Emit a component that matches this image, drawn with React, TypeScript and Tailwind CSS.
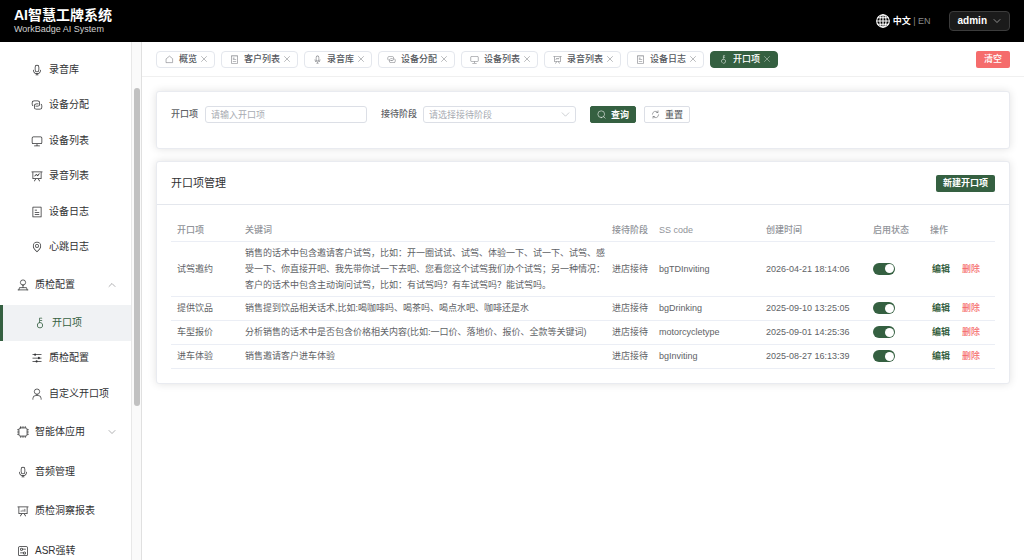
import React from "react";

const ICONS: Record<string, string[]> = {
  mic: [
    "M512 128a128 128 0 0 0-128 128v256a128 128 0 1 0 256 0V256a128 128 0 0 0-128-128zm0-64a192 192 0 0 1 192 192v256a192 192 0 1 1-384 0V256A192 192 0 0 1 512 64zm-32 832v-64a288 288 0 0 1-288-288v-32a32 32 0 0 1 64 0v32a224 224 0 0 0 224 224h64a224 224 0 0 0 224-224v-32a32 32 0 1 1 64 0v32a288 288 0 0 1-288 288v64h64a32 32 0 1 1 0 64H416a32 32 0 1 1 0-64h64z",
  ],
  connection: [
    "M640 384v64H448a128 128 0 0 0-128 128v128a128 128 0 0 0 128 128h320a128 128 0 0 0 128-128V576a128 128 0 0 0-64-110.848V394.88c74.56 26.368 128 97.472 128 181.056v128a192 192 0 0 1-192 192H448a192 192 0 0 1-192-192V576a192 192 0 0 1 192-192h192z",
    "M384 640v-64h192a128 128 0 0 0 128-128V320a128 128 0 0 0-128-128H256a128 128 0 0 0-128 128v128a128 128 0 0 0 64 110.848v70.272A192.064 192.064 0 0 1 64 448V320a192 192 0 0 1 192-192h320a192 192 0 0 1 192 192v128a192 192 0 0 1-192 192H384z",
  ],
  monitor: [
    "M544 768v128h192a32 32 0 1 1 0 64H288a32 32 0 1 1 0-64h192V768H192A128 128 0 0 1 64 640V256a128 128 0 0 1 128-128h640a128 128 0 0 1 128 128v384a128 128 0 0 1-128 128H544zM192 192a64 64 0 0 0-64 64v384a64 64 0 0 0 64 64h640a64 64 0 0 0 64-64V256a64 64 0 0 0-64-64H192z",
  ],
  dataLine: [
    "M359.168 768H160a32 32 0 0 1-32-32V192H64a32 32 0 0 1 0-64h896a32 32 0 1 1 0 64h-64v544a32 32 0 0 1-32 32H665.216l110.848 192h-73.856L591.36 768H433.024L322.176 960H248.32l110.848-192zM832 192H192v512h640V192zM342.656 534.656a32 32 0 1 1-45.312-45.312L444.992 341.76l125.44 94.08L679.04 300.032a32 32 0 1 1 49.92 39.936L581.632 524.224 451.008 426.24 342.656 534.592z",
  ],
  dataAnalysis: [
    "m665.216 768 110.848 192h-73.856L591.36 768H433.024L322.176 960H248.32l110.848-192H160a32 32 0 0 1-32-32V192H64a32 32 0 0 1 0-64h896a32 32 0 1 1 0 64h-64v544a32 32 0 0 1-32 32H665.216zM832 192H192v512h640V192zM352 448a32 32 0 0 1 32 32v64a32 32 0 0 1-64 0v-64a32 32 0 0 1 32-32zm160-64a32 32 0 0 1 32 32v128a32 32 0 0 1-64 0V416a32 32 0 0 1 32-32zm160-64a32 32 0 0 1 32 32v192a32 32 0 1 1-64 0V352a32 32 0 0 1 32-32z",
  ],
  tickets: [
    "M192 128v768h640V128H192zm-32-64h704a32 32 0 0 1 32 32v832a32 32 0 0 1-32 32H160a32 32 0 0 1-32-32V96a32 32 0 0 1 32-32zm160 448h384v64H320v-64zm0-192h192v64H320v-64zm0 384h384v64H320v-64z",
  ],
  location: [
    "M800 416a288 288 0 1 0-576 0c0 118.144 94.528 272.128 288 456.576C705.472 688.128 800 534.144 800 416zM512 960C277.312 746.688 160 565.312 160 416a352 352 0 0 1 704 0c0 149.312-117.312 330.688-352 544z",
    "M512 512a96 96 0 1 0 0-192 96 96 0 0 0 0 192zm0 64a160 160 0 1 1 0-320 160 160 0 0 1 0 320z",
  ],
  key: [
    "M448 456.064V96a32 32 0 0 1 32-32.064L672 64a32 32 0 0 1 0 64H512v128h160a32 32 0 0 1 0 64H512v128a256 256 0 1 1-64 8.064zM512 896a192 192 0 1 0 0-384 192 192 0 0 0 0 384z",
  ],
  operation: [
    "M389.44 768a96.064 96.064 0 0 1 181.12 0H896v64H570.56a96.064 96.064 0 0 1-181.12 0H128v-64h261.44zm192-288a96.064 96.064 0 0 1 181.12 0H896v64H762.56a96.064 96.064 0 0 1-181.12 0H128v-64h453.44zm-320-288a96.064 96.064 0 0 1 181.12 0H896v64H442.56a96.064 96.064 0 0 1-181.12 0H128v-64h133.44z",
  ],
  setUp: [
    "M224 160a64 64 0 0 0-64 64v576a64 64 0 0 0 64 64h576a64 64 0 0 0 64-64V224a64 64 0 0 0-64-64H224zm0-64h576a128 128 0 0 1 128 128v576a128 128 0 0 1-128 128H224A128 128 0 0 1 96 800V224A128 128 0 0 1 224 96z",
    "M384 416a64 64 0 1 0 0-128 64 64 0 0 0 0 128zm0 64a128 128 0 1 1 0-256 128 128 0 0 1 0 256z",
    "M480 320h256a32 32 0 1 1 0 64H480a32 32 0 1 1 0-64zm160 416a64 64 0 1 0 0-128 64 64 0 0 0 0 128zm0 64a128 128 0 1 1 0-256 128 128 0 0 1 0 256z",
    "M288 640h256a32 32 0 1 1 0 64H288a32 32 0 1 1 0-64z",
  ],
};

// line icons on a 16 unit grid
const LINES: Record<string, string> = {
  stamp: "M8 8.2a3.5 3.5 0 1 0 0-7 3.5 3.5 0 0 0 0 7zM8 8.2v3.3M2.5 14.5l.8-3h9.4l.8 3M1.5 14.5h13",
  user: "M8 8.5a3.6 3.6 0 1 0 0-7.2 3.6 3.6 0 0 0 0 7.2zM2.5 15v-1a4 4 0 0 1 4-4h3a4 4 0 0 1 4 4v1",
  cpu: "M4.5 2.5h7a2 2 0 0 1 2 2v7a2 2 0 0 1-2 2h-7a2 2 0 0 1-2-2v-7a2 2 0 0 1 2-2zM5 2.5V.7M8 2.5V.7M11 2.5V.7M5 15.3v-1.8M8 15.3v-1.8M11 15.3v-1.8M.7 5h1.8M.7 8h1.8M.7 11h1.8M13.5 5h1.8M13.5 8h1.8M13.5 11h1.8",
  house: "M2.5 6.5 8 2l5.5 4.5v7h-11z",
  search: "M7.5 13.5a6 6 0 1 0 0-12 6 6 0 0 0 0 12zM12 12l2.5 2.5",
  refresh: "M13.5 8.5a5.5 5.5 0 0 1-9.7 3.3M2.5 7.5a5.5 5.5 0 0 1 9.7-3.3M12.5 1.5v3h-3M3.5 14.5v-3h3",
  close: "m3 3 10 10M13 3 3 13",
  down: "m2 5 6 6 6-6",
  up: "m2 11 6-6 6 6",
};

function Icon({ name, className }: { name: string; className?: string }) {
  if (ICONS[name]) {
    return (
      <svg viewBox="0 0 1024 1024" fill="currentColor" className={`shrink-0 ${className}`} aria-hidden="true">
        {ICONS[name].map((d) => (
          <path key={d} d={d} />
        ))}
      </svg>
    );
  }
  return (
    <svg
      viewBox="0 0 16 16"
      fill="none"
      stroke="currentColor"
      strokeWidth={1}
      strokeLinecap="round"
      className={`shrink-0 ${className}`}
      aria-hidden="true"
    >
      <path d={LINES[name]} />
    </svg>
  );
}

const subMenu = [
  { icon: "mic", label: "录音库" },
  { icon: "connection", label: "设备分配" },
  { icon: "monitor", label: "设备列表" },
  { icon: "dataLine", label: "录音列表" },
  { icon: "tickets", label: "设备日志" },
  { icon: "location", label: "心跳日志" },
];

const qualityMenu = [
  { icon: "key", label: "开口项", active: true },
  { icon: "operation", label: "质检配置" },
  { icon: "user", label: "自定义开口项" },
];

const bottomMenu = [
  { icon: "cpu", label: "智能体应用", arrow: "down" },
  { icon: "mic", label: "音频管理" },
  { icon: "dataAnalysis", label: "质检洞察报表" },
  { icon: "setUp", label: "ASR强转" },
];

const tabs = [
  { icon: "house", label: "概览" },
  { icon: "tickets", label: "客户列表" },
  { icon: "mic", label: "录音库" },
  { icon: "connection", label: "设备分配" },
  { icon: "monitor", label: "设备列表" },
  { icon: "dataLine", label: "录音列表" },
  { icon: "tickets", label: "设备日志" },
  { icon: "key", label: "开口项", active: true },
];

const rows = [
  {
    name: "试驾邀约",
    keywords:
      "销售的话术中包含邀请客户试驾，比如：开一圈试试、试驾、体验一下、试一下、试驾、感受一下、你直接开吧、我先带你试一下去吧、您看您这个试驾我们办个试驾；另一种情况：客户的话术中包含主动询问试驾，比如：有试驾吗？有车试驾吗？能试驾吗。",
    stage: "进店接待",
    code: "bgTDInviting",
    time: "2026-04-21 18:14:06",
  },
  {
    name: "提供饮品",
    keywords: "销售提到饮品相关话术,比如:喝咖啡吗、喝茶吗、喝点水吧、咖啡还是水",
    stage: "进店接待",
    code: "bgDrinking",
    time: "2025-09-10 13:25:05",
  },
  {
    name: "车型报价",
    keywords: "分析销售的话术中是否包含价格相关内容(比如:一口价、落地价、报价、全款等关键词)",
    stage: "进店接待",
    code: "motorcycletype",
    time: "2025-09-01 14:25:36",
  },
  {
    name: "进车体验",
    keywords: "销售邀请客户进车体验",
    stage: "进店接待",
    code: "bgInviting",
    time: "2025-08-27 16:13:39",
  },
];

function SubItem({ icon, label, active }: any) {
  return (
    <a
      href="#"
      className={`flex items-center gap-[6px] pl-[31px] ${
        active ? "border-l-3 border-[#356041] bg-[#f0f2f4] text-[#356041]" : "text-[#303133]"
      }`}
    >
      <Icon name={icon} className="size-3" />
      {label}
    </a>
  );
}

function TopItem({ icon, label, arrow }: any) {
  return (
    <a href="#" className="flex items-center gap-[6px] pl-[17px] pr-[15px] text-[#303133]">
      <Icon name={icon} className="size-3" />
      <span className="grow">{label}</span>
      {arrow && <Icon name={arrow} className="size-2 text-[#606266]" />}
    </a>
  );
}

function Header() {
  return (
    <header className="flex h-[42px] shrink-0 items-center justify-between bg-black px-[14px] text-white">
      <div>
        <h1 className="text-[14px] leading-4 font-bold">AI智慧工牌系统</h1>
        <p className="text-[9px] leading-3 text-[#d0d0d0]">WorkBadge AI System</p>
      </div>
      <div className="flex items-center">
        <svg
          viewBox="0 0 16 16"
          fill="none"
          stroke="currentColor"
          strokeWidth={1.3}
          className="size-[14px]"
          aria-hidden="true"
        >
          <circle cx="8" cy="8" r="7.2" />
          <ellipse cx="8" cy="8" rx="3.5" ry="7.2" />
          <path d="M8 .8v14.4M.8 8h14.4M1.8 4.3h12.4M1.8 11.7h12.4" />
        </svg>
        <div className="ml-[3px] text-[9px] text-[#8a8a8a]">
          <button className="font-bold text-white">中文</button> | <button>EN</button>
        </div>
        <button className="ml-[18px] flex h-5 items-center gap-[6px] rounded border border-[#3c3c3c] bg-[#1b1b1b] px-2 text-[10px] font-bold">
          admin
          <Icon name="down" className="size-2" />
        </button>
      </div>
    </header>
  );
}

function Sidebar() {
  return (
    <aside className="flex w-[142px] shrink-0 overflow-hidden border-r border-[#e0e0e0] text-[10px]">
      <nav className="w-[131px] shrink-0 pt-[10px]">
        <div className="grid h-[213px] auto-rows-fr">
          {subMenu.map((item) => (
            <SubItem key={item.label} {...item} />
          ))}
        </div>
        <div className="grid h-10">
          <TopItem icon="stamp" label="质检配置" arrow="up" />
        </div>
        <div className="grid h-[107px] auto-rows-fr">
          {qualityMenu.map((item) => (
            <SubItem key={item.label} {...item} />
          ))}
        </div>
        <div className="grid h-[159px] auto-rows-fr">
          {bottomMenu.map((item) => (
            <TopItem key={item.label} {...item} />
          ))}
        </div>
      </nav>
      <div className="flex grow justify-center border-l border-[#e8e8e8] bg-[#fafafa] pt-[46px]">
        <div className="h-[318px] w-[6px] rounded-full bg-[#c1c1c1]" />
      </div>
    </aside>
  );
}

function TabsBar() {
  return (
    <div className="flex h-[35px] items-center justify-between border-b border-[#f0f0f0] px-[14px]">
      <div className="flex gap-[6px]">
        {tabs.map((tab) => (
          <button
            key={tab.label}
            className={`flex h-[17px] items-center rounded border pl-2 pr-[6px] font-medium ${
              tab.active ? "border-[#356041] bg-[#356041] text-white" : "border-[#e4e7ed] text-[#55585e]"
            }`}
          >
            <Icon name={tab.icon} className="size-[9px] mr-[5px] opacity-80" />
            {tab.label}
            <Icon name="close" className="size-2 ml-[3px] opacity-80" />
          </button>
        ))}
      </div>
      <button className="h-[17px] rounded-xs bg-[#f56c6c] px-2 font-medium text-white">清空</button>
    </div>
  );
}

function SearchCard() {
  return (
    <form className="flex h-[58px] items-start rounded-[3px] border border-[#e9ebf0] bg-white px-[14px] pt-[14px] shadow-[0_0_9px_rgba(0,0,0,0.12)]">
      <label htmlFor="item" className="leading-[17px] font-medium text-[#606266]">
        开口项
      </label>
      <input
        id="item"
        placeholder="请输入开口项"
        className="ml-[7px] h-[17px] w-[162px] rounded-[3px] border border-[#dcdfe6] px-[5px] placeholder:text-[#a8abb2]"
      />
      <label htmlFor="stage" className="ml-[14px] leading-[17px] font-medium text-[#606266]">
        接待阶段
      </label>
      <div className="relative ml-[6px]">
        <select
          id="stage"
          className="h-[17px] w-[153px] appearance-none rounded-[3px] border border-[#dcdfe6] px-[5px] text-[#a8abb2]"
        >
          <option>请选择接待阶段</option>
        </select>
        <Icon name="down" className="pointer-events-none absolute right-[6px] top-1 size-[9px] text-[#a8abb2]" />
      </div>
      <button
        type="button"
        className="ml-[14px] flex h-[17px] items-center gap-[5px] rounded-xs border border-[#356041] bg-[#356041] px-[6px] font-bold text-white"
      >
        <Icon name="search" className="size-[9px]" />
        查询
      </button>
      <button
        type="button"
        className="ml-2 flex h-[17px] items-center gap-[5px] rounded-xs border border-[#dcdfe6] px-[6px] font-medium text-[#606266]"
      >
        <Icon name="refresh" className="size-[9px]" />
        重置
      </button>
    </form>
  );
}

function TableCard() {
  return (
    <section className="rounded-[3px] border border-[#e9ebf0] bg-white shadow-[0_0_9px_rgba(0,0,0,0.12)]">
      <div className="flex h-[43px] items-center justify-between border-b border-[#e4e7ed] px-[14px]">
        <h2 className="text-[11px] text-[#303133]">开口项管理</h2>
        <button className="h-[17px] rounded-xs bg-[#356041] px-[7px] font-bold text-white">新建开口项</button>
      </div>
      <div className="p-[14px]">
        <table className="w-full table-fixed text-left text-[#606266]">
          <colgroup>
            <col className="w-[68px]" />
            <col />
            <col className="w-[47px]" />
            <col className="w-[107px]" />
            <col className="w-[107px]" />
            <col className="w-[57px]" />
            <col className="w-[71px]" />
          </colgroup>
          <thead>
            <tr className="h-[22px] border-b border-[#ebeef5] text-[#909399]">
              {["开口项", "关键词", "接待阶段", "SS code", "创建时间", "启用状态", "操作"].map((h) => (
                <th key={h} className="pl-[6px] font-medium">
                  {h}
                </th>
              ))}
            </tr>
          </thead>
          <tbody>
            {rows.map((row) => (
              <tr key={row.code} className="h-6 border-b border-[#ebeef5]">
                <td className="pl-[6px]">{row.name}</td>
                <td className="py-[3px] pl-[6px]">{row.keywords}</td>
                <td className="pl-[6px]">{row.stage}</td>
                <td className="pl-[6px]">{row.code}</td>
                <td className="pl-[6px]">{row.time}</td>
                <td className="pl-[6px]">
                  <label className="relative flex h-3 w-[22px] items-center rounded-full bg-[#356041]">
                    <input type="checkbox" defaultChecked aria-label={row.name} className="absolute inset-0 opacity-0" />
                    <span className="ml-auto mr-px size-[9px] rounded-full bg-white" />
                  </label>
                </td>
                <td className="pl-2">
                  <div className="flex gap-3">
                    <button className="font-bold text-[#356041]">编辑</button>
                    <button className="font-medium text-[#f56c6c]">删除</button>
                  </div>
                </td>
              </tr>
            ))}
          </tbody>
        </table>
      </div>
    </section>
  );
}

export default function App() {
  return (
    <div className="flex h-screen flex-col overflow-hidden bg-white font-['Liberation_Sans','Noto_Sans_CJK_SC',sans-serif] text-[9px] leading-4">
      <Header />
      <div className="flex min-h-0 grow">
        <Sidebar />
        <main className="min-w-0 grow">
          <TabsBar />
          <div className="flex flex-col gap-3 px-[14px] pt-[14px]">
            <SearchCard />
            <TableCard />
          </div>
        </main>
      </div>
    </div>
  );
}
